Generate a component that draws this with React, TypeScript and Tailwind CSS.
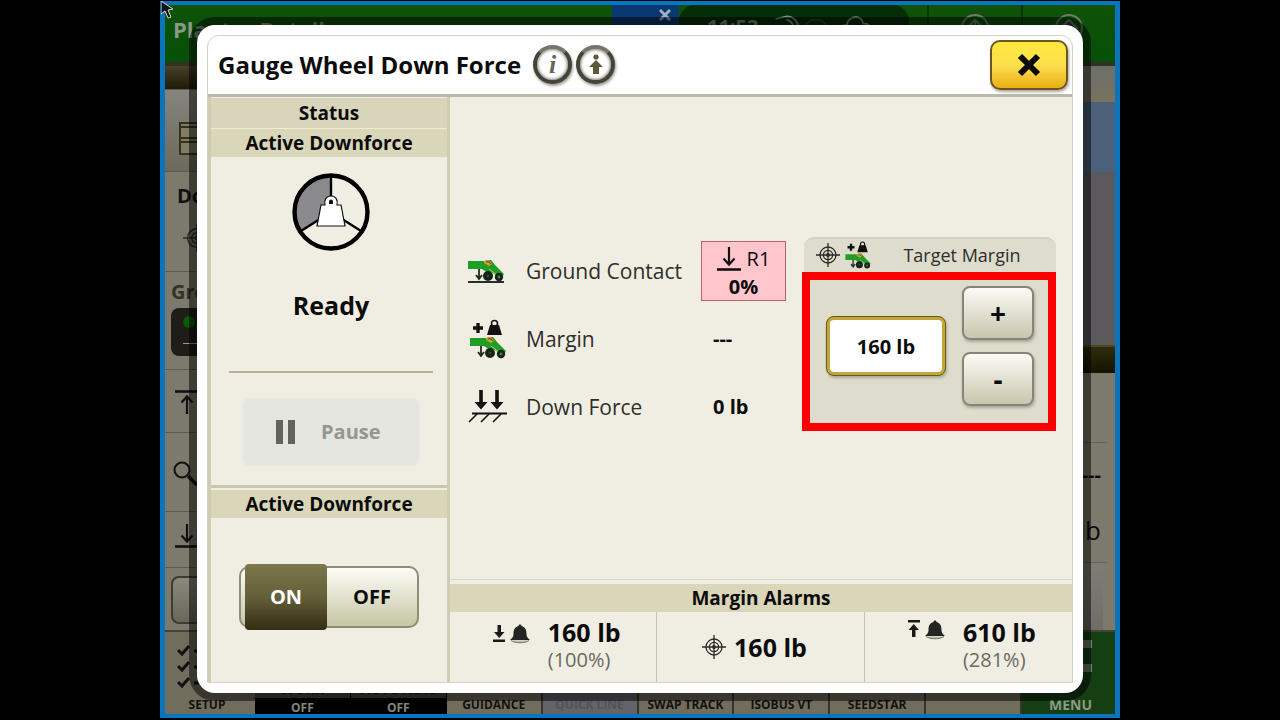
import { useState } from "react";
import type { ReactNode } from "react";

const toolbar = ["GUIDANCE", "QUICK LINE", "SWAP TRACK", "ISOBUS VT", "SEEDSTAR", ""];

function Crosshair({ className }: { className: string }) {
  return (
    <svg viewBox="0 0 24 24" className={className} fill="none" stroke="#2b2b28" strokeWidth="1.3" aria-hidden="true">
      <circle cx="12" cy="12" r="8" />
      <circle cx="12" cy="12" r="4.6" />
      <circle cx="12" cy="12" r="1.4" />
      <path d="M12 0v24M0 12h24" />
    </svg>
  );
}

function PlanterShape() {
  return (
    <g>
      <path d="M0 1h17l2-1h4l4 5 9 9-3 4-10-6-3 1-6-4H0z" fill="#1f9d24" />
      <path d="M16 1c3-2 7-1 8 3l-3 2-5-3z" fill="#c9a43a" />
      <path d="M18 2c2-1 4 0 5 2" fill="none" stroke="#a33a1c" strokeWidth="1.2" />
      <path d="M21 9l8 6" stroke="#a8d860" strokeWidth="1" />
      <path d="M11 9v9M8 15l3 4 3-4" fill="none" stroke="#1d2b1d" strokeWidth="1.8" />
      <circle cx="20" cy="16" r="5" fill="#16241a" />
      <circle cx="20" cy="16" r="1.2" fill="#3c4f3c" />
      <circle cx="31" cy="17" r="4.2" fill="#16241a" />
      <circle cx="31" cy="17" r="1.4" fill="#4f7f4f" />
    </g>
  );
}

function ContactIcon() {
  return (
    <svg viewBox="0 0 40 28" className="h-7 w-10" aria-hidden="true">
      <g transform="translate(0 3)">
        <PlanterShape />
      </g>
      <path d="M0 25h36" stroke="#2b2b28" strokeWidth="2" />
    </svg>
  );
}

function MarginIcon({ className }: { className: string }) {
  return (
    <svg viewBox="0 0 40 40" className={className} aria-hidden="true">
      <path d="M5 9h10M10 4v10" stroke="#111" strokeWidth="3.4" />
      <path d="M19 16l3-10h9l3 10z" fill="#111" />
      <circle cx="26.5" cy="4.5" r="3" fill="none" stroke="#111" strokeWidth="1.6" />
      <g transform="translate(2 18)">
        <PlanterShape />
      </g>
    </svg>
  );
}

function DownForceIcon() {
  return (
    <svg viewBox="0 0 40 36" className="h-9 w-10" fill="none" stroke="#111" aria-hidden="true">
      <path d="M13 1v13M29 1v13" strokeWidth="3.6" />
      <path d="M6.5 13h13L13 20.5zM22.5 13h13L29 20.5z" fill="#111" stroke="none" />
      <path d="M4 24.5h35" strokeWidth="2" />
      <path d="M9 25l-8 8M21 25l-8 8M33 25l-8 8" strokeWidth="1.6" />
    </svg>
  );
}

function BarArrow({ className, up = false }: { className: string; up?: boolean }) {
  return (
    <svg viewBox="0 0 24 24" className={className} fill="none" stroke="#111" aria-hidden="true">
      <g transform={up ? "rotate(180 12 12)" : undefined}>
        <path d="M12 0v17M6.5 11.5l5.5 6 5.5-6" strokeWidth="2.2" />
        <path d="M0 22.5h24" strokeWidth="2.6" />
      </g>
    </svg>
  );
}

function AlarmIcon({ up = false }: { up?: boolean }) {
  return (
    <svg viewBox="0 0 40 20" className="h-5 w-10 shrink-0" aria-hidden="true">
      <g transform={up ? "rotate(180 7 9)" : undefined} fill="#1a1a18">
        <path d="M5.5 1H9v7h3.5L7.250 14 2 8h3.5z" />
        <path d="M1 15.5h12V18H1z" />
      </g>
      <path d="M28 .5c1 0 1.500.6 1.500 1.500 4 1.300 5 4 5 8 0 2.500 1 4 3.500 6H18c2.500-2 3.500-3.500 3.500-6 0-4 1-6.700 5-8 0-.9.5-1.500 1.500-1.500z" fill="#242422" />
      <path d="M19 16.5c4 3 14 3 18 0" fill="#bdbbae" stroke="#77756a" />
    </svg>
  );
}

function DownforceDial() {
  return (
    <svg viewBox="0 0 78 78" className="size-[78px]" role="img" aria-label="Downforce state">
      <path d="M39 39V3A36 36 0 0 0 9 58z" fill="#8a8a8c" />
      <path d="M39 39V3M39 39L9 58M39 39l30 19" stroke="#000" strokeWidth="2.4" />
      <circle cx="39" cy="39" r="36.5" fill="none" stroke="#000" strokeWidth="4.4" />
      <path d="M33 32c-1-5 1-9 6-9s7 4 6 9h4l4 21H25l4-21z" fill="#fff" stroke="#111" strokeWidth="1.2" />
      <path d="M37 31v-2.5a2 2 0 0 1 4 0V31z" fill="#111" />
    </svg>
  );
}

function RoundButton({ label, children }: { label: string; children: ReactNode }) {
  return (
    <button
      type="button"
      aria-label={label}
      className="grid size-[39px] place-items-center rounded-full border-4 border-[#45443a] border-t-[#77766a] bg-white shadow-[1px_2px_3px_#9a9a90,inset_0_0_3px_1px_#8a897d]"
    >
      {children}
    </button>
  );
}

function Heading({ children }: { children: ReactNode }) {
  return <h2 className="bg-[#d9d6b9] text-center text-[19px] leading-7 font-bold">{children}</h2>;
}

function Backdrop() {
  return (
    <div aria-hidden="true" className="col-start-1 row-start-1 flex min-w-0 flex-col overflow-hidden bg-[#7b7a6d]">
      <div className="flex h-[57px] shrink-0 bg-linear-to-b from-[#0f5208] to-[#065008] text-[#8b9a86]">
        <div className="w-[447px] shrink-0 px-2 pt-2 text-[22px] leading-8 font-bold">Planter Details</div>
        <div className="flex w-[67px] shrink-0 justify-end bg-[#07386f] pt-1 pr-2">
          <svg viewBox="0 0 12 12" className="size-3" stroke="#9fb0c4" strokeWidth="3">
            <path d="M1 1l10 10M11 1L1 11" />
          </svg>
        </div>
        <div className="flex w-[230px] shrink-0 gap-4 rounded-2xl bg-[#042d08] px-7 pt-2">
          <span className="text-xl leading-7 font-bold text-[#7d8c79]">11:53</span>
          <svg viewBox="0 0 130 28" className="h-7 w-[130px]" fill="none" stroke="#81907f" strokeWidth="2">
            <path d="M2 4l14-3c8 0 13 6 14 14M15 5c5 1 8 5 9 10" />
            <circle cx="51" cy="20" r="15" stroke="#2b4a2b" />
            <path d="M81 20c-2-6 3-9 8-8 0-7 6-10 11-10s8 3 9 8c7-1 10 4 8 10" />
          </svg>
        </div>
        <div className="w-[18px] shrink-0" />
        <div className="grid flex-1 grid-cols-2 *:flex *:justify-center *:border-l-2 *:border-[#063606] *:pt-2">
          <div>
            <svg viewBox="0 0 30 30" className="size-[30px]" fill="none" stroke="#6d7c69" strokeWidth="2">
              <circle cx="15" cy="15" r="13" />
              <path d="M15 7v15M9 13l6-6 6 6" />
            </svg>
          </div>
          <div>
            <svg viewBox="0 0 30 30" className="size-[30px]" fill="none" stroke="#6d7c69" strokeWidth="2">
              <circle cx="15" cy="15" r="13" />
              <path d="M15 7l8 8-8 8-8-8z" fill="#333" />
            </svg>
          </div>
        </div>
      </div>

      <div className="flex flex-1 justify-between border-t-4 border-[#2e3420]">
        <div className="flex w-24 flex-col divide-y divide-[#5d5c50]">
          <div className="h-6 bg-linear-to-b from-[#4a4228] to-[#1d1a08]" />
          <div className="h-[82px] bg-linear-to-b from-[#85847e] to-[#6c6a5c] px-3.5 pt-8">
            <svg viewBox="0 0 36 34" className="h-[34px] w-9" fill="#807d62" stroke="#33321f" strokeWidth="2">
              <path d="M1 1h34v31H1zM1 5h34M1 16h34M1 20h34" />
            </svg>
          </div>
          <div className="h-[100px] px-3 pt-2 text-xl leading-8 font-bold text-[#111]">
            Down
            <Crosshair className="mt-3 ml-1.5 size-7" />
          </div>
          <div className="h-[98px] px-1.5 pt-1 text-xl leading-8 font-bold text-[#33322a]">
            Grou
            <div className="h-12 rounded-lg bg-[#1e1d18] px-2 py-2">
              <div className="ml-1 size-3 rounded-full bg-[#0a5a0c]" />
              <div className="ml-1 h-4 w-8 border-b border-[#9a9a8c]" />
            </div>
          </div>
          <div className="h-[63px] px-2.5 pt-5">
            <BarArrow up className="size-6" />
          </div>
          <div className="h-[79px] px-2 pt-7">
            <svg viewBox="0 0 26 26" className="size-[26px]" fill="none" stroke="#111" strokeWidth="2">
              <circle cx="9" cy="9" r="7.5" />
              <path d="M15 15l9 9" strokeWidth="3.5" />
            </svg>
          </div>
          <div className="h-14 px-2.5 pt-3">
            <BarArrow className="size-6" />
          </div>
          <div className="flex-1 px-1.5 pt-2">
            <div className="h-12 rounded-lg border-2 border-[#3d3c34] bg-linear-to-b from-[#8a897e] to-[#68675b]" />
          </div>
        </div>

        <div className="flex w-12 flex-col">
          <div className="h-9 bg-linear-to-b from-[#6e6e6a] to-[#77735e]" />
          <div className="h-[70px] bg-[#4d6079]" />
          <div className="h-[173px] bg-[#5b595b]" />
          <div className="h-7 border-t-2 border-[#4c4825] bg-linear-to-b from-[#302c0c] to-[#151302]" />
          <div className="mr-2 h-[70px] border-b border-[#646357]" />
          <div className="mr-2 flex h-[120px] flex-col justify-between border-b border-[#646357] px-1.5 pt-4 pb-4 text-right">
            <span className="text-xl leading-8 font-bold">---</span>
            <span className="text-[26px] leading-8">lb</span>
          </div>
          <div className="mr-3 flex-1 bg-linear-to-b from-[#7d7c75] to-[#6e6d68]" />
        </div>
      </div>

      <div className="flex h-[84px] shrink-0 border-t-2 border-[#45443a] bg-[#716d5c] text-center text-xs leading-[18px] font-bold text-[#111]">
        <div className="flex w-[90px] shrink-0 flex-col justify-between pt-3 pr-1.5">
          <svg viewBox="0 0 40 46" className="ml-3 h-[46px] w-10" fill="none" stroke="#111" strokeWidth="3">
            <path d="M1 6l4 4 7-8M1 22l4 4 7-8M1 38l4 4 7-8M17 7h20M17 23h20M17 39h20" />
          </svg>
          SETUP
        </div>
        <div className="grid flex-1 grid-cols-8">
          {["WORK", "AUTOTRAC"].map((name) => (
            <div key={name} className="flex flex-col justify-end border-r border-black bg-[#48463c]">
              <span className="text-sm leading-[18px]">{name}</span>
              <span className="bg-black pt-1 leading-3 text-[#85857c]">OFF</span>
            </div>
          ))}
          {toolbar.map((name) => (
            <div
              key={name}
              className={`flex items-end justify-center border-r-2 border-[#37352b] ${name === "QUICK LINE" ? "bg-[#64636a] text-[#535257]" : ""}`}
            >
              {name}
            </div>
          ))}
        </div>
        <div className="flex w-[93px] shrink-0 items-end justify-center bg-[#153f12] pl-1 text-sm leading-[18px] text-[#8b9a86]">
          <div className="flex flex-col items-center gap-6">
            <div className="ml-auto h-8 w-9 border-y-8 border-[#6e7e6c]" />
            MENU
          </div>
        </div>
      </div>
    </div>
  );
}

function StatusColumn() {
  const [active, setActive] = useState(true);

  return (
    <aside className="flex flex-col border-x-3 border-[#cfccb4] bg-[#f0eee2] pt-px">
      <div className="border-b border-[#efedca] bg-[#d9d5bb] text-center text-[19px] leading-[30px] font-bold">Status</div>
      <Heading>Active Downforce</Heading>
      <div className="flex flex-1 flex-col items-center pt-4 pr-3.5 pl-4.5">
        <DownforceDial />
        <p className="mt-[38px] text-[25px] leading-8 font-bold">Ready</p>
        <hr className="mt-[50px] w-full border-t-2 border-[#b5b296]" />
        <button
          type="button"
          disabled
          className="mt-6 flex h-[70px] w-[180px] items-center gap-6 rounded-lg border-2 border-[#eceae6] bg-[#e5e5df] pl-8 text-xl font-bold text-[#96968f]"
        >
          <svg viewBox="0 0 22 24" className="h-6 w-[22px]" fill="#62625e" aria-hidden="true">
            <path d="M1 0h7v24H1zM13 0h7v24h-7z" />
          </svg>
          Pause
        </button>
      </div>
      <div className="h-[197px] border-t-3 border-[#c9c6ac] pt-0.5">
        <Heading>Active Downforce</Heading>
        <div
          role="radiogroup"
          aria-label="Active Downforce"
          className="mx-auto mt-12 flex h-[62px] w-[180px] items-center rounded-[10px] border-2 border-[#8f8d78] bg-linear-to-b from-[#fdfdf8] to-[#c5c6a3] pl-1 text-xl font-bold"
        >
          <label className={`relative grid h-[66px] w-[82px] place-items-center ${active ? "rounded-[4px] bg-linear-to-b from-[#7d774b] via-[#655f39] to-[#352d14] text-white" : ""}`}>
            <input type="radio" name="downforce" className="absolute size-0 appearance-none" checked={active} onChange={() => setActive(true)} />
            ON
          </label>
          <label className={`relative grid h-[58px] flex-1 place-items-center ${active ? "" : "rounded-[4px] bg-linear-to-b from-[#7d774b] to-[#352d14] text-white"}`}>
            <input type="radio" name="downforce" className="absolute size-0 appearance-none" checked={!active} onChange={() => setActive(false)} />
            OFF
          </label>
        </div>
      </div>
    </aside>
  );
}

function Reading({ icon, label, children }: { icon: ReactNode; label: string; children: ReactNode }) {
  return (
    <div className="flex h-[68px] items-center">
      <div className="w-[58px]">{icon}</div>
      <dt className="flex-1 text-[21px] leading-8 text-[#2e2e2c]">{label}</dt>
      <dd className="w-[85px] text-xl font-bold">{children}</dd>
    </div>
  );
}

function TargetMargin() {
  const [target, setTarget] = useState(160);
  const step = "h-[54px] w-[72px] rounded-lg border-2 border-[#85847a] bg-linear-to-b from-[#fbfbf6] to-[#c9c6ad] text-[28px] leading-none font-bold shadow-[1px_2px_3px_#a9a797]";

  return (
    <section className="w-[254px]">
      <div className="ml-0.5 flex h-[35px] items-center rounded-t-[10px] border-t-2 border-[#d2d0c2] bg-[#dddccd] pr-1 pl-3">
        <Crosshair className="size-6" />
        <MarginIcon className="ml-1 size-7" />
        <label htmlFor="target" className="flex-1 text-center text-[18px] leading-7 text-[#2e2e2c]">
          Target Margin
        </label>
      </div>
      <div className="flex h-[159px] items-center justify-between border-8 border-[#ff0000] bg-[#dddccd] pr-3.5 pb-2.5 pl-4">
        <input
          id="target"
          readOnly
          value={`${target} lb`}
          className="h-[60px] w-[120px] rounded-lg border-4 border-[#c2a83c] bg-white text-center text-xl font-bold shadow-[1px_2px_3px_#a9a797] outline-1 -outline-offset-1 outline-[#6b5a1c]"
        />
        <div className="flex flex-col gap-3">
          <button type="button" aria-label="Increase" className={step} onClick={() => setTarget(target + 1)}>
            +
          </button>
          <button type="button" aria-label="Decrease" className={step} onClick={() => setTarget(target - 1)}>
            -
          </button>
        </div>
      </div>
    </section>
  );
}

function AlarmValue({ value, percent }: { value: string; percent: string }) {
  return (
    <div>
      <p className="text-[25px] leading-8 font-bold">{value}</p>
      <p className="text-xl leading-6 text-[#6b6a60]">{percent}</p>
    </div>
  );
}

export default function App() {
  return (
    <div className="flex min-h-screen justify-center bg-black pt-px pb-0.5 font-['Open_Sans',sans-serif] text-[#0c0c0c]">
      <div className="relative grid w-3/4 min-w-[900px] grid-cols-1 border-x-[5px] border-y-4 border-[#0a74bd]">
        <Backdrop />
        <svg viewBox="0 0 14 20" className="absolute -top-1 -left-1 h-5 w-3.5" aria-hidden="true">
          <path d="M0 0v13l4-3 3 7 3-1-3-7 5-1z" fill="#111" stroke="#d9d9cf" strokeWidth="1" />
        </svg>

        <main className="z-10 col-start-1 row-start-1 mx-8 mt-5 mb-[21px] flex flex-col rounded-[18px] bg-white p-2.5 shadow-[0_0_0_8px_rgba(0,0,0,0.5)]">
          <div className="flex flex-1 flex-col overflow-hidden rounded-t-xl border border-[#d3d1c6]">
            <header className="flex h-[61px] items-center gap-1 border-b-3 border-[#b9b8aa] pr-1 pb-px pl-2.5">
              <h1 className="mr-2 text-2xl leading-8 font-bold">Gauge Wheel Down Force</h1>
              <RoundButton label="Information">
                <span className="font-['Liberation_Serif',serif] text-[26px] leading-6 font-bold text-[#66655a] italic">i</span>
              </RoundButton>
              <RoundButton label="Operator help">
                <svg viewBox="0 0 20 24" className="h-6 w-5" fill="#5c5a3c" aria-hidden="true">
                  <circle cx="10" cy="4" r="2.6" />
                  <path d="M10 7l7 7h-4v7H7v-7H3z" />
                </svg>
              </RoundButton>
              <button
                type="button"
                aria-label="Close"
                className="ml-auto grid h-[50px] w-[78px] place-items-center rounded-[10px] border-2 border-[#6a5523] bg-linear-to-b from-[#ffe93e] via-[#fbe04c] to-[#eaae0e] shadow-[1px_2px_3px_#a9a797]"
              >
                <svg viewBox="0 0 24 24" className="size-6" stroke="#0c0c0c" strokeWidth="6" aria-hidden="true">
                  <path d="M3 3l18 18M21 3L3 21" />
                </svg>
              </button>
            </header>

            <div className="grid flex-1 grid-cols-[242px_1fr]">
              <StatusColumn />
              <div className="flex flex-col bg-[#f0eee2]">
                <div className="flex flex-1 items-center gap-4 pt-px pr-4 pl-4.5">
                  <dl className="flex-1">
                    <Reading icon={<ContactIcon />} label="Ground Contact">
                      <span className="flex h-[60px] flex-col items-center justify-center border border-[#b9626b] bg-[#ffc6cd] pt-1 leading-7">
                        <span className="flex items-center gap-1.5 font-normal">
                          <BarArrow className="size-6" />
                          R1
                        </span>
                        <span>0%</span>
                      </span>
                    </Reading>
                    <Reading icon={<MarginIcon className="size-10" />} label="Margin">
                      <span className="pl-3">---</span>
                    </Reading>
                    <Reading icon={<DownForceIcon />} label="Down Force">
                      <span className="pl-3">0 lb</span>
                    </Reading>
                  </dl>
                  <div className="pb-2.5">
                    <TargetMargin />
                  </div>
                </div>

                <section className="border-t border-[#d6d4c2] pt-1">
                  <Heading>Margin Alarms</Heading>
                  <div className="grid h-[70px] grid-cols-3 divide-x divide-[#c6c4b4]">
                    <div className="flex justify-center gap-4 pt-1 pl-1.5">
                      <div className="pt-2">
                        <AlarmIcon />
                      </div>
                      <AlarmValue value="160 lb" percent="(100%)" />
                    </div>
                    <div className="flex items-center justify-center gap-2 pr-3 text-[25px] leading-8 font-bold">
                      <Crosshair className="size-6" />
                      160 lb
                    </div>
                    <div className="flex justify-center gap-4 pt-1 pl-1.5">
                      <div className="pt-1">
                        <AlarmIcon up />
                      </div>
                      <AlarmValue value="610 lb" percent="(281%)" />
                    </div>
                  </div>
                </section>
              </div>
            </div>
          </div>
        </main>
      </div>
    </div>
  );
}
